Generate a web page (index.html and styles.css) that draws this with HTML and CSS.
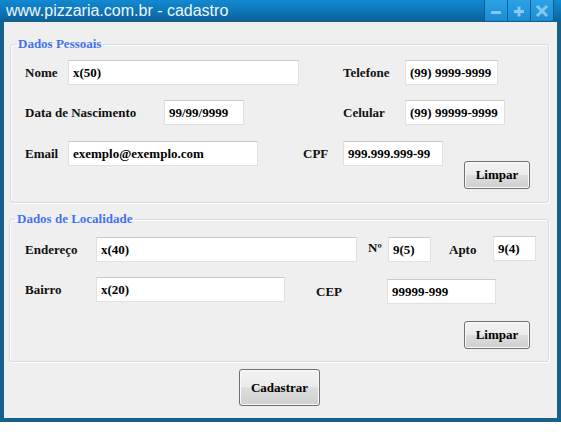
FILE: index.html
```html
<!DOCTYPE html>
<html lang="pt-BR">
<head>
<meta charset="utf-8">
<title>cadastro</title>
<link rel="stylesheet" href="styles.css">
</head>
<body>
<div class="window">
  <div class="titlebar">
    <span class="title">www.pizzaria.com.br - cadastro</span>
    <div class="controls">
      <span class="ctl"><svg width="22" height="21" viewBox="0 0 22 21"><rect x="6" y="11" width="10" height="3" fill="#86c8ee"/></svg></span>
      <span class="ctl"><svg width="22" height="21" viewBox="0 0 22 21"><rect x="6" y="10" width="10" height="3" fill="#86c8ee"/><rect x="9.5" y="6.5" width="3" height="10" fill="#86c8ee"/></svg></span>
      <span class="ctl"><svg width="22" height="21" viewBox="0 0 22 21"><path d="M7 7 L15 15 M15 7 L7 15" stroke="#86c8ee" stroke-width="3" stroke-linecap="square"/></svg></span>
    </div>
  </div>
  <div class="client">
    <fieldset class="group g1">
      <legend>Dados Pessoais</legend>
      <div class="gbody b1">
        <div class="row">
          <label class="lbl w-nome">Nome</label>
          <input class="in w-231" type="text" value="x(50)">
          <label class="lbl w-tel ml-44">Telefone</label>
          <input class="in w-93" type="text" value="(99) 9999-9999">
        </div>
        <div class="row mt-15">
          <label class="lbl w-nasc">Data de Nascimento</label>
          <input class="in w-80" type="text" value="99/99/9999">
          <label class="lbl w-tel ml-99">Celular</label>
          <input class="in w-100" type="text" value="(99) 99999-9999">
        </div>
        <div class="row mt-16">
          <label class="lbl w-nome">Email</label>
          <input class="in w-190" type="text" value="exemplo@exemplo.com">
          <label class="lbl w-cpf ml-45">CPF</label>
          <input class="in w-100" type="text" value="999.999.999-99">
          <button class="btn btn-limpar lim1" type="button">Limpar</button>
        </div>
      </div>
    </fieldset>
    <fieldset class="group g2">
      <legend>Dados de Localidade</legend>
      <div class="gbody b2">
        <div class="row">
          <label class="lbl w-end">Endereço</label>
          <input class="in w-261" type="text" value="x(40)">
          <label class="lbl w-num ml-11">Nº</label>
          <input class="in w-43" type="text" value="9(5)">
          <label class="lbl w-apto ml-18">Apto</label>
          <input class="in w-43 up-1" type="text" value="9(4)">
        </div>
        <div class="row mt-15">
          <label class="lbl w-end">Bairro</label>
          <input class="in w-189" type="text" value="x(20)">
          <div class="cep">
            <label class="lbl w-end">CEP</label>
            <input class="in w-109" type="text" value="99999-999">
          </div>
        </div>
        <div class="row mt-17">
          <button class="btn btn-limpar lim2" type="button">Limpar</button>
        </div>
      </div>
    </fieldset>
    <button class="btn btn-cadastrar" type="button">Cadastrar</button>
  </div>
</div>
</body>
</html>
```
FILE: styles.css
```css
html, body {
  margin: 0;
  padding: 0;
  background: #ffffff;
}
.window {
  width: 561px;
  height: 422px;
  background: #16618a;
  display: flex;
  flex-direction: column;
}
.titlebar {
  height: 22px;
  display: flex;
  align-items: flex-start;
  justify-content: space-between;
  background: linear-gradient(to bottom, #1389d1 0%, #0c79bc 45%, #0e6ba6 75%, #125f8c 100%);
}
.title {
  padding-left: 6px;
  font-family: "Liberation Sans", Arial, sans-serif;
  font-size: 16px;
  line-height: 22px;
  color: #eef6fc;
  white-space: nowrap;
}
.controls {
  display: flex;
  gap: 1px;
  margin-right: 7px;
  background: #0d5e8e;
  padding: 0 1px 1px 1px;
  margin-top: 0;
}
.ctl {
  display: block;
  width: 22px;
  height: 21px;
  background: linear-gradient(to bottom, #2ba2e6 0%, #2096dc 60%, #1c8cd2 100%);
}
.ctl svg {
  display: block;
}
.client {
  height: 396px;
  margin: 0 4px;
  background: #efefef;
  display: flex;
  flex-direction: column;
  align-items: flex-start;
}
.group {
  box-sizing: border-box;
  margin: 0;
  padding: 0;
  min-width: 0;
  border: 1px solid #d2dbe3;
  border-radius: 3px;
  box-shadow: 1px 1px 0 #ffffff, inset 1px 1px 0 #ffffff;
}
.group legend {
  margin-left: 5px;
  padding: 0 2px;
  font-family: "Liberation Serif", "Times New Roman", serif;
  font-weight: bold;
  font-size: 13px;
  line-height: 14px;
  color: #3f72f2;
}
.g1 {
  width: 539px;
  margin-top: 15px;
  margin-left: 6px;
}
.g2 {
  width: 540px;
  margin-top: 9px;
  margin-left: 5px;
}
.b1 {
  padding: 9px 0 13px 14px;
}
.b2 {
  padding: 11px 0 12px 15px;
}
.row {
  display: flex;
  align-items: flex-start;
}
.mt-15 { margin-top: 15px; }
.mt-16 { margin-top: 16px; }
.mt-17 { margin-top: 17px; }
.ml-11 { margin-left: 11px; }
.ml-18 { margin-left: 18px; }
.ml-44 { margin-left: 44px; }
.ml-45 { margin-left: 45px; }
.ml-99 { margin-left: 99px; }
.lbl {
  display: flex;
  align-items: center;
  height: 25px;
  font-family: "Liberation Serif", "Times New Roman", serif;
  font-weight: bold;
  font-size: 13px;
  color: #111111;
  white-space: nowrap;
}
.w-nome { width: 43px; }
.w-tel { width: 62px; }
.w-nasc { width: 139px; }
.w-cpf { width: 40px; }
.w-end { width: 71px; }
.w-num { width: 20px; align-items: flex-start; padding-top: 3px; box-sizing: border-box; }
.w-apto { width: 44px; }
.in {
  box-sizing: border-box;
  height: 25px;
  margin: 0;
  padding: 0 0 0 4px;
  border: 1px solid #e0e0e0;
  border-top-color: #c9c9c9;
  background: #ffffff;
  font-family: "Liberation Serif", "Times New Roman", serif;
  font-weight: bold;
  font-size: 13px;
  color: #000000;
  outline: none;
}
.w-43 { width: 43px; }
.w-80 { width: 80px; }
.w-93 { width: 93px; }
.w-100 { width: 100px; }
.w-109 { width: 109px; }
.w-189 { width: 189px; }
.w-190 { width: 190px; }
.w-231 { width: 231px; }
.w-261 { width: 261px; }
.up-1 { margin-top: -1px; }
.cep {
  display: flex;
  align-items: center;
  margin-left: 31px;
  margin-top: 2px;
}
.btn {
  box-sizing: border-box;
  margin: 0;
  padding: 0;
  border: 1px solid #707070;
  border-radius: 3px;
  box-shadow: inset 0 0 0 1px #fbfbfb;
  background: linear-gradient(to bottom, #f3f3f3 0%, #ebebeb 48%, #dddddd 52%, #cfcfcf 100%);
  font-family: "Liberation Serif", "Times New Roman", serif;
  font-weight: bold;
  font-size: 13px;
  color: #000000;
}
.btn-limpar {
  width: 66px;
  height: 28px;
}
.lim1 {
  margin-left: 21px;
  margin-top: 20px;
}
.lim2 {
  margin-left: 439px;
}
.btn-cadastrar {
  width: 81px;
  height: 37px;
  margin-top: 7px;
  margin-left: 235px;
}
```
